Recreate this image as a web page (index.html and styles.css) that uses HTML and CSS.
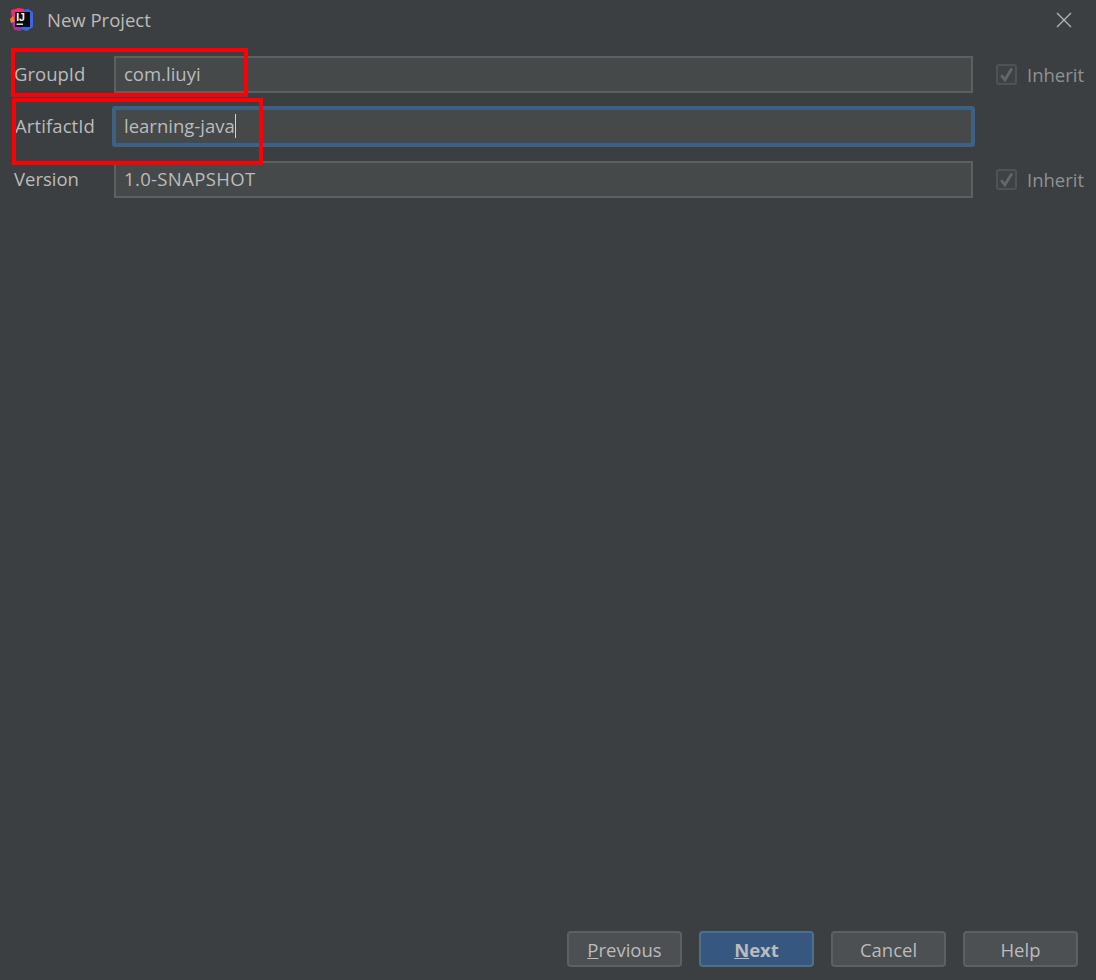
FILE: index.html
```html
<!DOCTYPE html>
<html lang="en">
<head>
<meta charset="utf-8">
<title>New Project</title>
<link rel="stylesheet" href="styles.css">
</head>
<body>
<div class="dialog">
  <header class="titlebar">
    <svg class="logo" width="24" height="24" viewBox="0 0 24 24" aria-hidden="true">
      <path d="M1 2 L9 0 L14 1 L16 5 L8 20 L3 19 Z" fill="#e8326f"/>
      <path d="M14 2 L18 1 L23 4 L23 19 L17 23 L10 21 Z" fill="#3e66dd"/>
      <path d="M0 11 L3 8 L5 15 L1 15 Z" fill="#f58220"/>
      <path d="M2 14 L8 14 L11 23 L4 22 Z" fill="#a8329a"/>
      <rect x="5" y="4" width="15" height="15" fill="#0b0b0b"/>
      <rect x="6.5" y="15.5" width="6.5" height="1.4" fill="#f2f2f2"/>
      <text class="logo-text" x="6.2" y="12.6">IJ</text>
    </svg>
    <span class="title">New Project</span>
    <svg class="close" width="16" height="16" viewBox="0 0 16 16" aria-hidden="true">
      <path d="M1 1 L15 15 M15 1 L1 15" stroke="#b4b6b8" stroke-width="1.3" fill="none"/>
    </svg>
  </header>

  <main class="form">
    <div class="row">
      <label class="label">GroupId</label>
      <div class="field">com.liuyi</div>
      <div class="inherit">
        <span class="check"><svg width="15" height="15" viewBox="0 0 14 14" aria-hidden="true"><path d="M2 7.5 L5.5 12 L12 1.5" stroke="#646769" stroke-width="2.6" fill="none"/></svg></span>
        <span class="inherit-text">Inherit</span>
      </div>
    </div>
    <div class="row row-focus">
      <label class="label label-artifact">ArtifactId</label>
      <div class="field field-focus">learning-java<span class="caret"></span></div>
    </div>
    <div class="row">
      <label class="label">Version</label>
      <div class="field field-caps">1.0-SNAPSHOT</div>
      <div class="inherit">
        <span class="check"><svg width="15" height="15" viewBox="0 0 14 14" aria-hidden="true"><path d="M2 7.5 L5.5 12 L12 1.5" stroke="#646769" stroke-width="2.6" fill="none"/></svg></span>
        <span class="inherit-text">Inherit</span>
      </div>
    </div>
  </main>

  <footer class="actions">
    <button class="btn"><span class="u">P</span>revious</button>
    <button class="btn btn-primary"><span class="u">N</span>ext</button>
    <button class="btn">Cancel</button>
    <button class="btn">Help</button>
  </footer>

  <div class="mark mark-group"></div>
  <div class="mark mark-artifact"></div>
</div>
</body>
</html>
```

FILE: styles.css
```css
* { box-sizing: border-box; }
html, body { margin: 0; padding: 0; }
body {
  background: #3c3f41;
  color: #bbbbbb;
  font-family: "Open Sans", "Noto Sans", sans-serif;
  font-size: 18.5px;
}
.dialog {
  position: relative;
  width: 1096px;
  height: 980px;
  display: flex;
  flex-direction: column;
}
.titlebar {
  height: 40px;
  display: flex;
  align-items: center;
  padding: 0 24px 0 10px;
  flex: none;
}
.logo { flex: none; }
.logo-text {
  fill: #ffffff;
  font-family: "Liberation Sans", sans-serif;
  font-size: 10.5px;
  font-weight: 700;
}
.title { margin-left: 13px; flex: 1; padding-bottom: 1px; }
.form {
  flex: 1;
  padding: 16px 13px 0 14px;
  display: flex;
  flex-direction: column;
  gap: 15px;
}
.row { display: flex; align-items: center; height: 37px; }
.row-focus { margin-bottom: 1px; }
.label { width: 100px; flex: none; padding-bottom: 2px; }
.label-artifact { padding-left: 1px; letter-spacing: 0.1px; }
.field {
  width: 859px;
  height: 37px;
  flex: none;
  background: #45494a;
  border: 2px solid #5d5f60;
  padding: 0 0 2px 8px;
  display: flex;
  align-items: center;
}
.field-caps { letter-spacing: 0.35px; }
.field-focus {
  height: 41px;
  width: 863px;
  margin-left: -2px;
  border: 4px solid #3d6185;
  border-radius: 3px;
  padding-left: 8px;
}
.caret { width: 1px; height: 24px; background: #d0d0d0; margin-left: 0; }
.inherit {
  margin-left: 23px;
  display: flex;
  align-items: center;
  gap: 10px;
  color: #8f9193;
}
.check {
  width: 21px;
  height: 21px;
  border: 2px solid #505355;
  border-radius: 3px;
  display: flex;
  align-items: center;
  justify-content: center;
  background: #3f4244;
}
.actions {
  flex: none;
  display: flex;
  justify-content: flex-end;
  gap: 17px;
  padding: 0 18px 13px 0;
}
.btn {
  width: 115px;
  height: 36px;
  background: #4c5052;
  border: 2px solid #5e6060;
  border-radius: 4px;
  color: #bbbbbb;
  font-family: inherit;
  font-size: 18.5px;
  padding: 1px 0 0;
}
.btn-primary {
  background: #365880;
  border-color: #4c708c;
  font-weight: 700;
}
.u { text-decoration: underline; }
.mark {
  position: absolute;
  border: 4px solid #fb0007;
}
.mark-group { left: 11px; top: 48px; width: 237px; height: 49px; }
.mark-artifact { left: 12px; top: 98px; width: 251px; height: 67px; }
```
